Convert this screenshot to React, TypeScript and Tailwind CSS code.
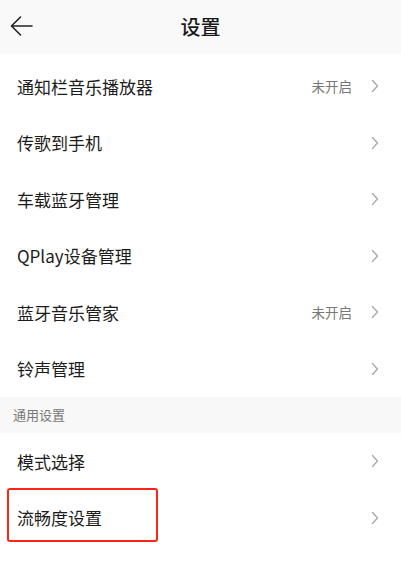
const items = [
  { label: "通知栏音乐播放器", status: "未开启" },
  { label: "传歌到手机" },
  { label: "车载蓝牙管理" },
  { label: "QPlay设备管理" },
  { label: "蓝牙音乐管家", status: "未开启" },
  { label: "铃声管理" },
];

const general = [{ label: "模式选择" }, { label: "流畅度设置", highlight: true }];

const Chevron = () => (
  <svg width="8" height="14" viewBox="0 0 8 14" fill="none" className="text-[#a8a8a8]">
    <path d="M1.5 1.5 L6.5 7 L1.5 12.5" stroke="currentColor" strokeWidth="1.3" strokeLinecap="round" strokeLinejoin="round" />
  </svg>
);

type RowProps = { label: string; status?: string; highlight?: boolean };

const Row = ({ label, status, highlight }: RowProps) => (
  <div className="relative flex h-[56.5px] items-center justify-between pl-[17px] pr-[22px]">
    <span className="text-[17px] text-[#1c1c1c]">{label}</span>
    <div className="flex items-center gap-[19px]">
      {status && <span className="text-[13.5px] text-[#777]">{status}</span>}
      <Chevron />
    </div>
    {highlight && (
      <div className="absolute left-[7px] top-[-2px] h-[54px] w-[151px] rounded-[3px] border-2 border-[#ff2318]" />
    )}
  </div>
);

export default function App() {
  return (
    <div className="h-[565px] w-[401px] overflow-hidden bg-white font-['Noto_Sans_CJK_SC',sans-serif]">
      <div className="bg-[#f9f9f9]">
        <div className="relative flex h-[52px] items-center justify-center">
          <svg className="absolute left-[10px] top-[15px]" width="24" height="22" viewBox="0 0 24 22" fill="none">
            <path d="M22 11 H2 M10.5 2 L1.5 11 L10.5 20" stroke="#222" strokeWidth="1.6" strokeLinecap="round" strokeLinejoin="round" />
          </svg>
          <span className="mt-[2px] text-[20px] font-medium text-[#1a1a1a]">设置</span>
        </div>
      </div>
      <div className="h-[6px] bg-gradient-to-b from-[#f9f9f9] to-white" />
      {items.map((it) => (
        <Row key={it.label} {...it} />
      ))}
      <div className="flex h-[36px] items-center bg-[#f8f8f8] pl-[13px] text-[13px] text-[#777]">通用设置</div>
      {general.map((it) => (
        <Row key={it.label} {...it} />
      ))}
    </div>
  );
}
